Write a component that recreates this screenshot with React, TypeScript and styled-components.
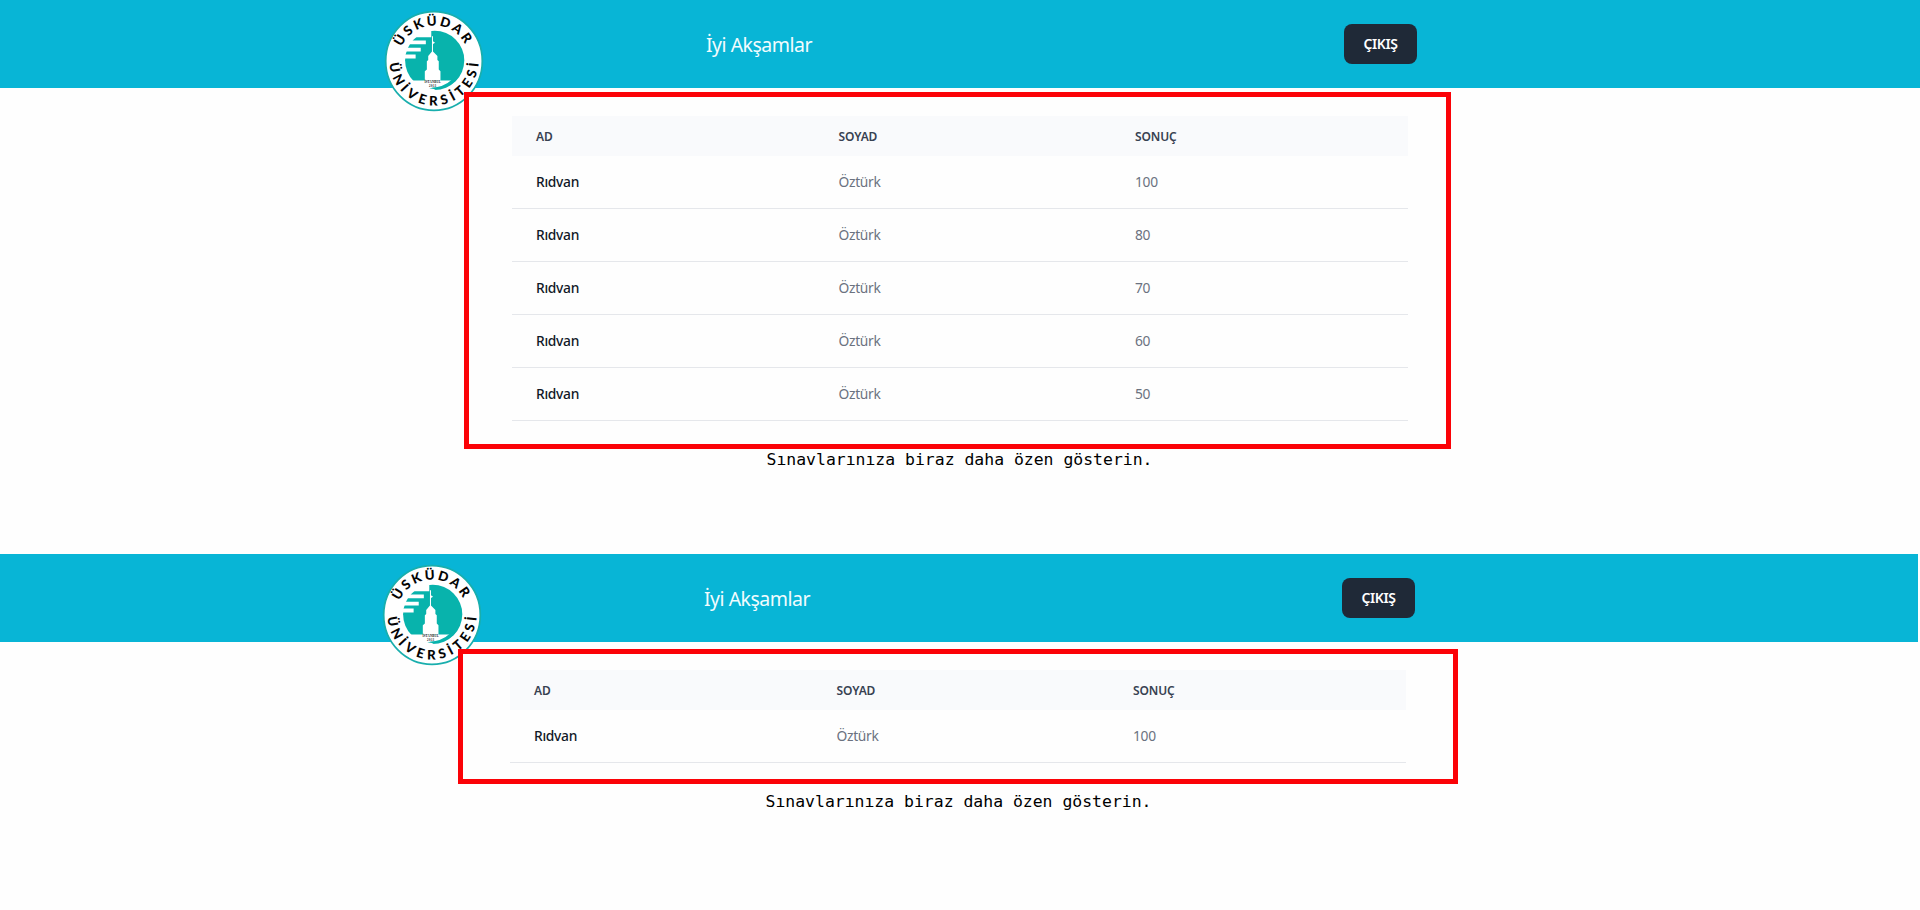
import React from "react";
import styled, { createGlobalStyle } from "styled-components";

const GlobalStyle = createGlobalStyle`
  *, *::before, *::after { box-sizing: border-box; }
  body {
    margin: 0;
    background: #fff;
    font-family: "Noto Sans", "Open Sans", sans-serif;
    overflow: hidden;
  }
`;

const Page = styled.main`
  width: 1920px;
  height: 910px;
  overflow: hidden;
  background: #fefefe;
`;

const Screen = styled.section<{ $width: number; $height: number }>`
  display: flex;
  flex-direction: column;
  width: ${(p) => p.$width}px;
  height: ${(p) => p.$height}px;
`;

const Header = styled.header<{ $inset: number }>`
  display: grid;
  grid-template-columns: 320px 638px 73px;
  grid-template-rows: 88px;
  align-items: center;
  flex: none;
  height: 88px;
  padding-left: ${(p) => p.$inset}px;
  background: #08b5d6;
`;

const LogoSlot = styled.div`
  align-self: start;
  height: 100px;
  margin: 11px 0 0 -1px;
  svg { display: block; overflow: visible; }
`;

const Greeting = styled.h1`
  margin: 2px 0 0;
  font-size: 19.5px;
  font-weight: 400;
  line-height: 28px;
  letter-spacing: -0.5px;
  color: #f2fcfe;
  white-space: nowrap;
`;

const ExitButton = styled.button`
  height: 40px;
  padding: 0;
  border: 0;
  border-radius: 8px;
  background: #1f2937;
  color: #fff;
  font: 600 14px/20px "Noto Sans", sans-serif;
  letter-spacing: -0.4px;
`;

const Frame = styled.div<{ $width: number; $margin: string; $padding: string }>`
  position: relative;
  z-index: 1;
  flex: none;
  width: ${(p) => p.$width}px;
  margin: ${(p) => p.$margin};
  padding: ${(p) => p.$padding};
  border: 5px solid #fb0207;
`;

const Table = styled.table`
  width: 896px;
  table-layout: fixed;
  border-collapse: separate;
  border-spacing: 0;
  text-align: left;
`;

const HeadCell = styled.th<{ $width?: number }>`
  width: ${(p) => (p.$width ? `${p.$width}px` : "auto")};
  height: 40px;
  padding: 2px 24px 0;
  background: #f9fafc;
  color: #374151;
  font-size: 12px;
  font-weight: 600;
  line-height: 16px;
  letter-spacing: -0.1px;
`;

const Cell = styled.td<{ $strong?: boolean }>`
  height: 53px;
  padding: 0 24px;
  border-bottom: 1px solid #e5e7eb;
  color: ${(p) => (p.$strong ? "#111827" : "#6b7280")};
  font-size: 13.8px;
  font-weight: ${(p) => (p.$strong ? 500 : 400)};
  line-height: 20px;
  letter-spacing: -0.3px;
`;

const Advice = styled.p<{ $top: number }>`
  margin: ${(p) => p.$top}px 0 0;
  padding-right: 1px;
  color: #000;
  font: 400 16.45px/24px "DejaVu Sans Mono", monospace;
  text-align: center;
`;

const Logo = ({ id }: { id: string }) => (
  <svg width="98" height="100" viewBox="48 36 288 294">
    <defs>
      <path id={`${id}-top`} d="M97 141.5 A103 103 0 0 1 286 140" />
      <path id={`${id}-bottom`} d="M61.2 189.9 A131 131 0 0 0 322.9 188" />
    </defs>
    <ellipse cx="192" cy="183" rx="142" ry="145" fill="#fff" stroke="#19aead" strokeWidth="5" />
    <circle cx="194" cy="181" r="87" fill="#08b3ac" />
    <g fill="#fff">
      <path d="M124 84h60v29h-60z M112 123h56v11h-56z M104 144h49v11h-49z M98 164h40v12H98z" />
      <path d="M186 110h3v15l6 4-6 4v22l13 13v12l4 4v24l5 5v28h-46v-28l6-5v-24l4-4v-12l11-13z" />
      <path d="M98 240h150q-22 22-62 22l20 12h-80z" />
    </g>
    <path d="M262 234Q230 272 178 263Q222 260 244 238z" fill="#08b3ac" />
    <g fontFamily="Liberation Serif, serif" fontWeight="700" fontSize="9" textAnchor="middle" fill="#111">
      <text x="188" y="248" textLength="48">İSTANBUL</text>
      <text x="188" y="260" textLength="22">2011</text>
    </g>
    <g fontFamily="Lato, sans-serif" fontWeight="900" fontSize="39" fill="#050505">
      <text textLength="232">
        <textPath href={`#${id}-top`} textLength="232">ÜSKÜDAR</textPath>
      </text>
      <text textLength="397">
        <textPath href={`#${id}-bottom`} textLength="397">ÜNİVERSİTESİ</textPath>
      </text>
    </g>
  </svg>
);

const TopBar = ({ id, inset }: { id: string; inset: number }) => (
  <Header $inset={inset}>
    <LogoSlot>
      <Logo id={id} />
    </LogoSlot>
    <Greeting>İyi Akşamlar</Greeting>
    <ExitButton>ÇIKIŞ</ExitButton>
  </Header>
);

const Results = ({ scores }: { scores: number[] }) => (
  <Table>
    <thead>
      <tr>
        <HeadCell $width={302.5}>AD</HeadCell>
        <HeadCell $width={296.5}>SOYAD</HeadCell>
        <HeadCell>SONUÇ</HeadCell>
      </tr>
    </thead>
    <tbody>
      {scores.map((score) => (
        <tr key={score}>
          <Cell $strong>Rıdvan</Cell>
          <Cell>Öztürk</Cell>
          <Cell>{score}</Cell>
        </tr>
      ))}
    </tbody>
  </Table>
);

export default function App() {
  return (
    <>
      <GlobalStyle />
      <Page>
        <Screen $width={1920} $height={554}>
          <TopBar id="first" inset={386} />
          <Frame $width={987} $margin="4px 0 0 464px" $padding="19px 38px 23px 43px">
            <Results scores={[100, 80, 70, 60, 50]} />
          </Frame>
          <Advice $top={-1}>Sınavlarınıza biraz daha özen gösterin.</Advice>
        </Screen>
        <Screen $width={1918} $height={356}>
          <TopBar id="second" inset={384} />
          <Frame $width={1000} $margin="7px 0 0 458px" $padding="16px 47px">
            <Results scores={[100]} />
          </Frame>
          <Advice $top={6}>Sınavlarınıza biraz daha özen gösterin.</Advice>
        </Screen>
      </Page>
    </>
  );
}
